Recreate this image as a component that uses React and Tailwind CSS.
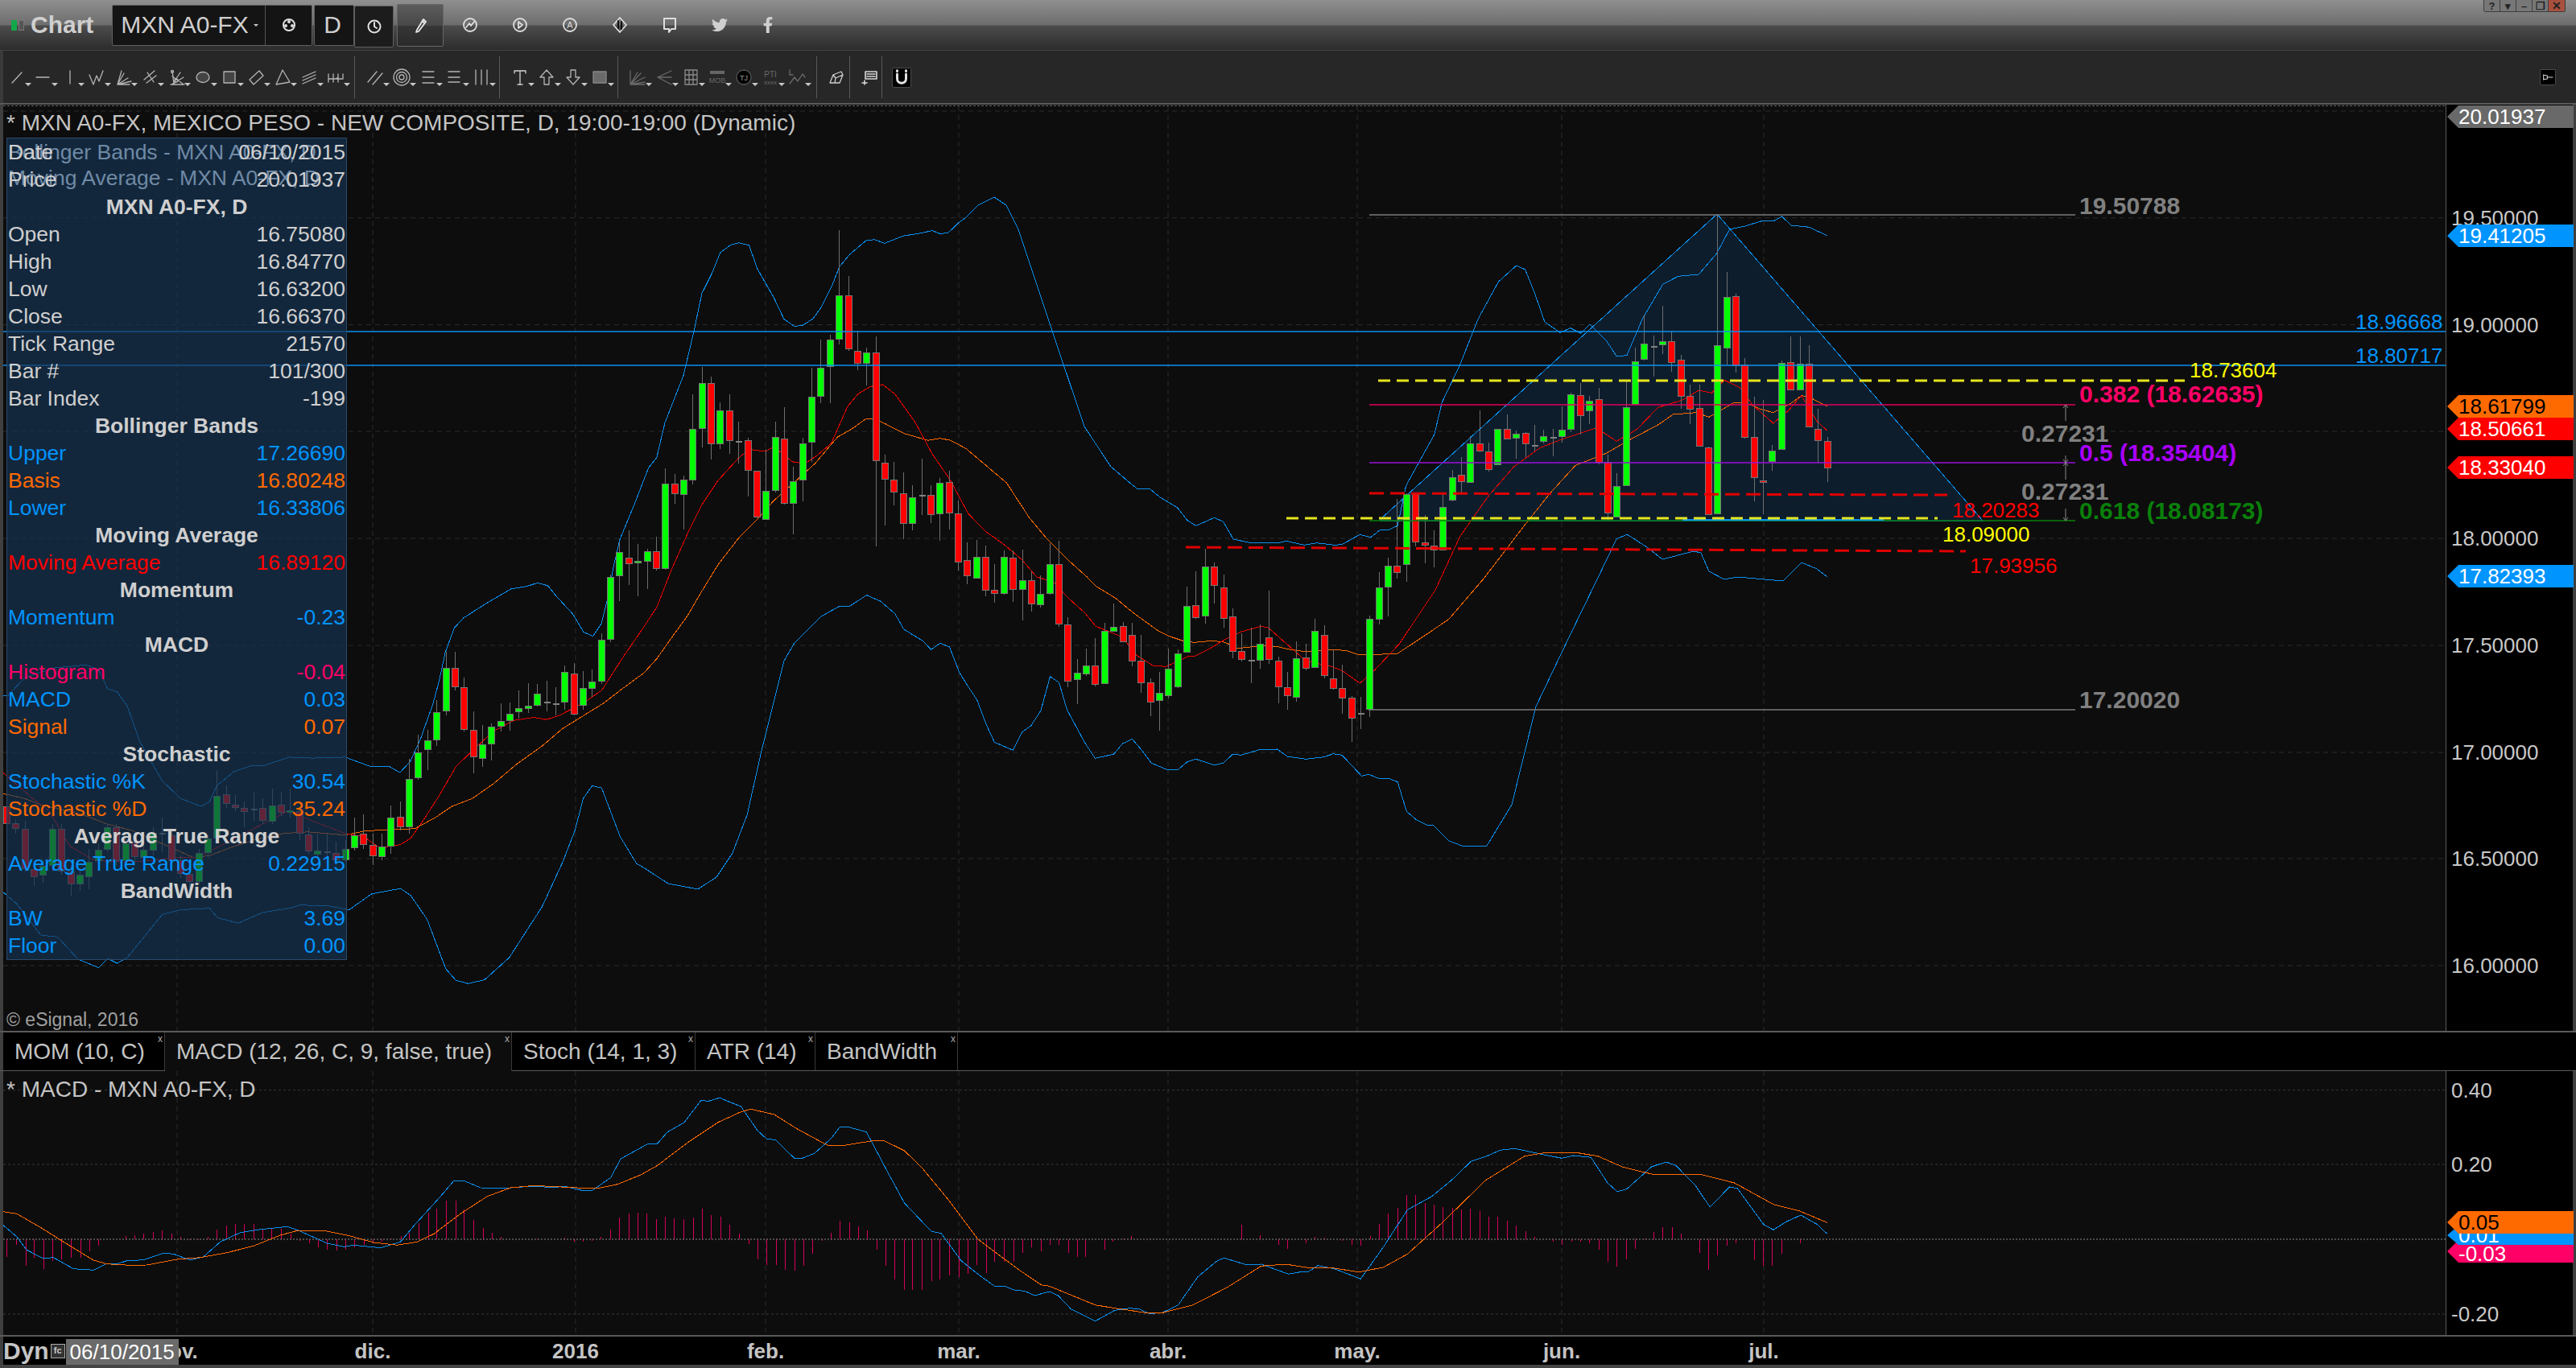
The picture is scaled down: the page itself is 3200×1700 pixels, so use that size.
// Chart window: candles, bollinger bands, fib drawing and MACD pane
import { FaTwitter, FaFacebookF } from "react-icons/fa";

const GRID_X = [220, 463, 715, 951, 1191, 1451, 1686, 1940, 2191];
const GRID_Y = [138, 270.7, 403.5, 536, 669, 802, 935, 1067, 1200];

// values read off the chart: [body top, body bottom, wick top, wick bottom, colour]
const seg = (oy, sy, rows) =>
  rows.map(([a, b, c, d, k]) => [oy + a / sy, oy + b / sy, oy + c / sy, oy + d / sy, k]);

const candles = [
  ...seg(680, 2.53, [
    [816, 870, 800, 880, "r"], [870, 884, 855, 900, "r"], [886, 1010, 860, 1020, "r"], [1012, 1035, 1000, 1065, "r"],
    [1002, 1030, 985, 1055, "g"], [888, 1000, 870, 1020, "g"], [888, 1018, 870, 1030, "r"], [1020, 1058, 1000, 1098, "r"],
    [1032, 1058, 1010, 1080, "g"], [990, 1035, 950, 1075, "g"], [952, 985, 930, 1000, "g"], [882, 950, 870, 960, "g"],
    [882, 985, 870, 1000, "r"], [932, 985, 900, 1010, "g"], [930, 972, 910, 1000, "r"], [952, 975, 920, 1000, "g"],
    [900, 952, 880, 970, "g"], [900, 900, 850, 960, "d"], [908, 985, 890, 1020, "r"], [985, 1025, 970, 1040, "r"],
    [1028, 1050, 1000, 1070, "r"], [962, 1050, 950, 1060, "g"], [918, 960, 905, 975, "g"], [782, 915, 700, 930, "g"],
    [778, 805, 750, 820, "r"], [810, 818, 780, 830, "r"], [820, 830, 800, 880, "r"], [826, 826, 770, 860, "d"],
    [820, 860, 790, 870, "r"], [814, 862, 760, 870, "g"], [812, 834, 770, 845, "r"], [828, 834, 760, 850, "g"],
    [832, 900, 815, 920, "r"], [905, 955, 880, 965, "r"], [955, 966, 900, 975, "g"], [958, 958, 900, 980, "d"],
    [962, 982, 925, 1000, "r"], [950, 982, 920, 990, "g"], [908, 946, 850, 955, "g"], [902, 934, 840, 950, "r"],
    [937, 970, 900, 1000, "r"], [942, 972, 900, 985, "g"], [852, 940, 812, 965, "g"], [848, 880, 800, 890, "r"],
    [730, 878, 665, 900, "g"], [646, 726, 590, 730, "g"], [608, 636, 575, 700, "g"], [520, 606, 480, 625, "g"],
    [382, 516, 330, 530, "g"], [382, 438, 330, 450, "r"], [442, 572, 410, 580, "r"], [576, 660, 515, 712, "r"],
    [621, 663, 560, 690, "g"], [566, 618, 555, 670, "g"], [548, 562, 490, 580, "g"], [526, 544, 488, 578, "g"],
    [507, 518, 450, 540, "g"], [500, 506, 428, 520, "g"], [462, 496, 430, 500, "g"], [488, 488, 420, 515, "d"],
    [494, 494, 440, 530, "d"], [394, 488, 372, 510, "g"], [398, 524, 365, 530, "r"], [444, 498, 390, 510, "g"],
    [424, 443, 385, 470, "g"], [292, 420, 270, 430, "g"],
  ]),
  ...seg(260, 1.96, [
    [897, 1047, 890, 1055, "g"], [836, 893, 810, 955, "g"], [850, 864, 783, 915, "r"], [857, 862, 815, 942, "g"],
    [834, 858, 828, 925, "g"], [834, 875, 797, 880, "r"], [669, 875, 632, 878, "g"], [669, 692, 645, 718, "r"],
    [660, 695, 648, 780, "g"], [536, 660, 450, 670, "g"], [424, 534, 385, 580, "g"], [424, 572, 408, 610, "r"],
    [491, 572, 470, 585, "g"], [491, 563, 450, 595, "r"], [566, 566, 517, 620, "d"], [564, 636, 557, 700, "r"],
    [638, 749, 638, 752, "r"], [687, 755, 585, 757, "g"], [556, 685, 518, 690, "g"], [559, 716, 483, 720, "r"],
    [664, 716, 628, 792, "g"], [571, 660, 556, 712, "g"], [458, 567, 387, 615, "g"], [387, 456, 318, 472, "g"],
    [319, 384, 305, 472, "g"], [211, 316, 50, 330, "g"], [211, 341, 162, 345, "r"], [345, 376, 295, 392, "r"],
    [349, 375, 338, 430, "g"], [349, 613, 310, 822, "r"], [619, 658, 598, 770, "r"], [660, 688, 615, 722, "r"],
    [693, 765, 640, 803, "r"], [702, 765, 672, 782, "g"], [698, 698, 608, 745, "d"], [697, 744, 672, 765, "r"],
    [667, 741, 655, 808, "g"], [665, 739, 637, 780, "r"], [742, 860, 710, 880, "r"],
  ]),
  ...seg(600, 3, [
    [289, 347, 222, 378, "r"], [277, 355, 213, 358, "g"], [277, 400, 234, 422, "r"], [400, 413, 303, 447, "r"],
    [277, 412, 252, 417, "g"], [280, 397, 252, 443, "r"], [364, 397, 249, 513, "g"], [364, 451, 330, 480, "r"],
    [415, 454, 345, 465, "g"], [304, 412, 225, 418, "g"], [304, 526, 217, 537, "r"], [529, 739, 501, 762, "r"],
    [709, 733, 657, 825, "g"], [682, 712, 618, 720, "g"], [682, 751, 580, 758, "r"], [553, 748, 522, 750, "g"],
    [538, 553, 450, 555, "g"], [535, 592, 519, 595, "r"], [568, 665, 522, 684, "r"], [664, 745, 567, 783, "r"],
    [745, 817, 730, 870, "r"], [784, 811, 705, 923, "g"], [694, 793, 618, 805, "g"], [637, 761, 620, 765, "g"],
    [460, 631, 387, 634, "g"], [457, 502, 330, 506, "r"], [313, 496, 245, 525, "g"], [313, 382, 297, 450, "r"],
    [391, 505, 342, 540, "r"], [499, 628, 468, 654, "r"], [628, 659, 560, 665, "r"], [662, 662, 540, 747, "d"],
    [601, 661, 528, 692, "g"], [577, 659, 402, 675, "r"], [664, 761, 648, 822, "r"], [763, 793, 705, 846, "r"],
    [655, 799, 590, 815, "g"], [652, 691, 600, 700, "r"], [553, 689, 507, 690, "g"], [568, 718, 530, 728, "r"],
    [730, 767, 622, 770, "r"], [766, 802, 678, 860, "r"], [802, 877, 795, 965, "r"], [860, 860, 797, 917, "d"],
    [508, 845, 495, 873, "g"], [391, 508, 333, 527, "g"], [310, 388, 280, 497, "g"], [310, 334, 60, 357, "r"],
    [42, 304, 40, 368, "g"], [43, 220, 35, 237, "r"], [223, 232, 120, 300, "r"], [235, 250, 178, 315, "r"],
    [91, 250, 42, 253, "g"],
  ]),
  ...seg(240, 3, [
    [1060, 1145, 1032, 1150, "g"], [1052, 1075, 985, 1125, "r"], [934, 1078, 905, 1080, "g"], [934, 961, 810, 965, "r"],
    [965, 1031, 930, 1038, "r"], [880, 1012, 878, 1015, "g"], [880, 916, 825, 918, "r"], [898, 913, 885, 990, "g"],
    [896, 935, 890, 985, "r"], [941, 941, 865, 960, "d"], [907, 925, 882, 932, "g"], [911, 911, 880, 980, "d"],
    [883, 906, 795, 930, "g"], [751, 880, 745, 890, "g"], [754, 829, 708, 900, "r"], [775, 811, 755, 860, "g"],
    [769, 1003, 725, 1010, "r"], [1004, 1192, 975, 1225, "r"], [1093, 1207, 1045, 1210, "g"], [799, 1090, 695, 1092, "g"],
    [628, 787, 575, 790, "g"], [562, 620, 452, 625, "g"], [573, 573, 530, 685, "d"], [553, 566, 420, 600, "g"],
    [553, 631, 515, 665, "r"], [622, 757, 603, 805, "r"], [757, 805, 715, 862, "r"], [803, 943, 715, 945, "r"],
    [950, 1198, 945, 1200, "r"], [568, 1195, 78, 1198, "g"], [388, 577, 295, 640, "g"], [386, 642, 376, 670, "r"],
    [640, 910, 615, 915, "r"], [910, 1060, 760, 1148, "r"], [1072, 1079, 770, 1198, "r"], [961, 1000, 938, 1035, "g"],
    [634, 956, 625, 958, "g"], [632, 733, 535, 735, "r"], [638, 733, 535, 735, "g"], [638, 871, 567, 873, "r"],
    [880, 922, 805, 1005, "r"], [926, 1024, 910, 1078, "r"],
  ]),
];

const map = (ox, sx, oy, sy, pts) => pts.map(([x, y]) => [ox + x / sx, oy + y / sy]);
const Z3 = (p) => map(0, 1.96, 680, 2.53, p);
const Z8 = (p) => map(400, 1.96, 260, 1.96, p);
const Z9 = (p) => map(1100, 2.24, 600, 3, p);
const Z4 = (p) => map(1600, 1.568, 240, 3, p);
const toPts = (p) => p.map(([x, y]) => `${x.toFixed(1)},${y.toFixed(1)}`).join(" ");

const upper = [
  ...Z3([[8, 466], [20, 466], [60, 410], [130, 380], [210, 370], [240, 385], [262, 445], [285, 455], [310, 500], [340, 610], [395, 735], [440, 790], [490, 815], [510, 800], [528, 750], [570, 705], [610, 688], [640, 688], [705, 660], [760, 663], [840, 660]]),
  ...Z8([[120, 1358], [165, 1358], [190, 1372], [215, 1345], [240, 1290], [270, 1205], [285, 1150], [300, 1080], [322, 1020], [345, 995], [400, 960], [460, 925], [500, 918], [525, 910], [550, 917], [570, 942], [610, 985], [637, 1030], [660, 1040], [680, 1010], [695, 950], [710, 870], [725, 805], [760, 720], [795, 630], [815, 605], [835, 520], [880, 405], [905, 300], [925, 205], [950, 155], [970, 105], [995, 87], [1015, 82], [1040, 88], [1060, 145], [1100, 215], [1125, 268], [1150, 285], [1170, 283], [1195, 267], [1215, 240], [1240, 190], [1260, 140], [1285, 110], [1325, 76], [1345, 74], [1370, 83], [1415, 65], [1460, 58], [1485, 52], [1505, 60], [1525, 57], [1550, 33], [1568, 20]]),
  [1215, 255], [1235, 245], [1250, 255], [1265, 285], [1306, 408], [1347, 530], [1380, 580],
  ...Z9([[680, 0], [700, 22], [735, 22], [765, 55], [812, 92], [840, 140], [864, 160], [915, 130], [940, 145], [968, 210], [1010, 222], [1100, 222], [1115, 217], [1165, 232], [1200, 224], [1250, 232], [1270, 230], [1320, 193], [1350, 203], [1375, 177], [1400, 175], [1425, 160]]),
  ...Z4([[230, 1090], [285, 900], [300, 780], [335, 640], [370, 470], [410, 330], [445, 270], [462, 285], [480, 370], [500, 480], [530, 520], [550, 503], [570, 522], [588, 490], [620, 550], [640, 608], [660, 605], [690, 470], [730, 340], [760, 310], [800, 303], [835, 225], [860, 135], [890, 123], [925, 103], [945, 105], [962, 87], [980, 120], [1015, 127], [1050, 158]]),
];

const lower = [
  ...Z3([[8, 1085], [40, 1120], [100, 1220], [140, 1225], [190, 1295], [240, 1322], [262, 1293], [285, 1308], [310, 1290], [395, 1155], [440, 1140], [510, 1135], [530, 1165], [580, 1182], [640, 1148], [705, 1135], [730, 1125], [800, 1128], [850, 1140], [905, 1090], [975, 1073], [1000, 1095], [1040, 1170], [1085, 1325], [1110, 1362], [1140, 1372], [1180, 1360], [1240, 1290], [1320, 1130], [1370, 990], [1400, 890], [1420, 790], [1442, 750], [1465, 757], [1510, 910], [1550, 995], [1568, 1008]]),
  [830, 1098], [867, 1105], [890, 1090], [910, 1060],
  ...Z8([[1035, 1475], [1070, 1320], [1125, 1100], [1150, 1057], [1215, 992], [1258, 968], [1283, 968], [1326, 940], [1360, 955], [1395, 985], [1415, 1020]]),
  ...Z9([[50, 545], [105, 590], [127, 622], [152, 598], [178, 612], [205, 705], [230, 760], [255, 810], [280, 900], [303, 967], [355, 997], [380, 930], [405, 905], [432, 850], [458, 722], [483, 745], [505, 845], [555, 970], [583, 1027], [635, 1012], [660, 972], [686, 955], [715, 1000], [740, 1045], [785, 1070], [813, 1070], [840, 1040], [863, 1030], [915, 1052], [940, 1045], [966, 1012], [990, 1015], [1040, 995], [1090, 993], [1118, 1020], [1170, 1030], [1220, 1022], [1246, 1010], [1270, 1015], [1325, 1093], [1345, 1087], [1372, 1102], [1400, 1102], [1425, 1115], [1450, 1225], [1478, 1257], [1505, 1275], [1525, 1277], [1568, 1335]]),
  [1816, 1051], [1847, 1051], [1878, 1000], [1908, 878], [1950, 790], [1984, 720], [2008, 670], [2021, 664], [2046, 680], [2065, 695], [2104, 685], [2113, 687], [2123, 710], [2142, 720], [2158, 717], [2215, 722], [2238, 699], [2257, 707], [2270, 717],
];

const basis = [
  ...Z3([[8, 775], [60, 790], [100, 810], [200, 840], [260, 870], [320, 890], [400, 935], [470, 975], [510, 970], [560, 945], [620, 920], [690, 900], [750, 895], [840, 905], [890, 892], [950, 888], [1010, 885], [1060, 850], [1100, 815], [1150, 790], [1200, 745], [1260, 680], [1320, 625], [1370, 570], [1420, 530], [1470, 490], [1510, 450], [1568, 395]]),
  ...Z8([[815, 1095], [850, 1045], [890, 990], [925, 930], [965, 865], [1015, 800], [1060, 755], [1100, 710], [1150, 665], [1200, 620], [1255, 555], [1290, 535], [1325, 510], [1345, 510], [1370, 522], [1420, 547], [1475, 563], [1505, 558], [1530, 563], [1568, 583]]),
  ...Z9([[337, 0], [400, 130], [450, 210], [510, 290], [560, 350], [585, 385], [640, 430], [690, 485], [757, 550], [790, 572], [830, 590], [860, 595], [910, 589], [945, 595], [980, 617], [1040, 608], [1090, 610], [1120, 620], [1170, 630], [1240, 622], [1280, 625], [1320, 642], [1370, 640], [1425, 636], [1500, 570], [1568, 508]]),
  ...Z4([[380, 1440], [420, 1340], [460, 1240], [510, 1120], [560, 1015], [620, 970], [665, 920], [720, 865], [750, 825], [795, 818], [820, 835], [870, 780], [890, 780], [920, 805], [945, 818], [975, 790], [1000, 755], [1015, 760], [1050, 795]]),
];

const avg = [
  ...Z3([[8, 710], [80, 790], [120, 830], [170, 940], [230, 985], [300, 990], [370, 985], [430, 975], [480, 975], [550, 930], [640, 870], [700, 830], [740, 850], [840, 900], [885, 910], [925, 945], [975, 935], [1000, 915], [1030, 860], [1070, 780], [1110, 690], [1150, 640], [1200, 580], [1250, 545], [1300, 535], [1330, 542], [1360, 530], [1420, 490], [1465, 450], [1520, 340], [1568, 250]]),
  ...Z8([[815, 970], [850, 880], [890, 790], [925, 720], [965, 660], [1015, 605], [1040, 585], [1080, 590], [1100, 578], [1145, 615], [1175, 620], [1205, 600], [1240, 570], [1280, 480], [1305, 450], [1335, 432], [1365, 427], [1395, 450], [1445, 520], [1485, 595], [1530, 660]]),
  ...Z9([[230, 115], [280, 183], [330, 230], [380, 287], [420, 350], [470, 372], [505, 425], [555, 485], [585, 535], [660, 575], [695, 640], [745, 682], [780, 685], [815, 665], [845, 645], [863, 645], [900, 620], [950, 580], [990, 555], [1045, 535], [1065, 540], [1120, 605], [1170, 665], [1235, 682], [1270, 700], [1320, 747], [1360, 700], [1430, 600], [1480, 500], [1530, 400]]),
  ...Z4([[335, 1280], [390, 1130], [440, 1020], [490, 950], [530, 920], [600, 875], [640, 925], [680, 880], [720, 800], [770, 770], [800, 735], [825, 745], [850, 697], [880, 725], [905, 790], [945, 858], [975, 810], [1000, 755], [1030, 850], [1050, 885]]),
];

const Z6 = (p) => map(0, 1.206, 1260, 3, p);
const Z7 = (p) => map(1300, 0.825, 1260, 3, p);

const macdLine = [
  ...Z6([[5, 788], [25, 830], [40, 880], [65, 912], [80, 908], [110, 950], [140, 955], [160, 930], [175, 932], [190, 920], [215, 917], [245, 892], [260, 895], [285, 918], [305, 905], [330, 850], [360, 815], [385, 805], [430, 793], [445, 805], [490, 855], [515, 868], [530, 862], [570, 872], [600, 850], [620, 790], [660, 680], [680, 622], [695, 622], [720, 648], [755, 650], [800, 642], [830, 648], [845, 642], [870, 657], [888, 657], [915, 610], [930, 540], [970, 485], [985, 483], [1000, 440], [1025, 405], [1050, 323], [1062, 325], [1078, 313], [1110, 345], [1135, 435], [1148, 465], [1162, 470], [1190, 538], [1200, 540], [1220, 520], [1245, 465], [1258, 422], [1272, 422], [1298, 440], [1330, 590], [1355, 705], [1395, 810], [1410, 818], [1440, 920], [1465, 970], [1490, 1015], [1505, 1015], [1520, 1030], [1535, 1033], [1550, 1050]]),
  ...Z7([[3, 1035], [12, 1050], [25, 1100], [50, 1145], [70, 1105], [85, 1097], [95, 1100], [105, 1117], [118, 1115], [135, 1085], [155, 980], [175, 920], [182, 910], [205, 935], [220, 933], [248, 970], [260, 962], [268, 962], [278, 938], [295, 950], [322, 988], [345, 870], [370, 730], [395, 680], [415, 620], [435, 550], [450, 532], [465, 508], [480, 502], [510, 525], [528, 538], [540, 528], [558, 535], [575, 630], [585, 663], [595, 652], [620, 570], [635, 552], [645, 565], [665, 640], [680, 720], [700, 645], [708, 650], [735, 785], [745, 805], [758, 775], [773, 750], [790, 785], [800, 820]]),
];

const signalLine = [
  ...Z6([[5, 737], [25, 745], [60, 795], [105, 865], [140, 918], [160, 932], [195, 937], [220, 936], [265, 915], [300, 908], [340, 890], [380, 865], [420, 825], [445, 808], [485, 808], [520, 825], [560, 852], [595, 862], [625, 850], [650, 820], [690, 745], [730, 680], [765, 648], [800, 640], [865, 648], [900, 648], [925, 635], [960, 600], [985, 565], [1030, 480], [1075, 405], [1110, 365], [1125, 355], [1160, 375], [1195, 430], [1240, 490], [1260, 492], [1310, 472], [1325, 473], [1355, 510], [1380, 570], [1420, 690], [1465, 840], [1500, 905], [1530, 960], [1560, 1010]]),
  ...Z7([[3, 1015], [50, 1085], [70, 1097], [100, 1113], [120, 1113], [150, 1085], [185, 1020], [220, 940], [245, 933], [270, 947], [295, 948], [320, 962], [345, 945], [370, 895], [405, 780], [450, 620], [490, 530], [510, 518], [545, 518], [565, 530], [590, 570], [620, 597], [650, 600], [670, 598], [705, 630], [745, 710], [772, 735], [800, 778]]),
];

// histogram bars [x on the crop, height, + is below the zero line]
const histLeft = [
  [10, 65], [24, 20], [38, 100], [51, 70], [65, 110], [78, 80], [92, 75], [106, 70], [120, 68], [134, 45], [147, 25],
  [188, -12], [202, -15], [215, -20], [229, -28], [243, -33], [257, -20], [270, -8], [283, 3], [297, 4], [311, -10], [325, -36],
  [339, -50], [352, -58], [366, -58], [380, -58], [393, -38], [407, -40], [421, -40], [435, -20], [449, 5], [463, 15], [476, 30],
  [490, 40], [504, 42], [517, 38], [531, 30], [545, 20], [558, 15], [572, 10], [586, -3], [600, -13], [613, -25], [627, -60],
  [641, -100], [654, -115], [668, -145], [682, -145], [695, -110], [709, -72], [723, -42], [737, -25], [750, -10], [805, -2],
  [846, -5], [860, 10], [873, 8], [887, 6], [900, -10], [914, -35], [928, -80], [942, -95], [955, -100], [969, -95], [983, -75],
  [996, -85], [1010, -78], [1024, -75], [1038, -80], [1052, -115], [1065, -90], [1079, -85], [1093, -55], [1107, -20], [1121, 18],
  [1135, 75], [1148, 95], [1162, 95], [1176, 115], [1190, 118], [1203, 100], [1217, 55], [1231, 5], [1245, -25], [1258, -68],
  [1272, -62], [1285, -48], [1299, -32], [1313, 38], [1327, 98], [1340, 150], [1354, 190], [1367, 190], [1381, 190], [1395, 155],
  [1408, 150], [1422, 135], [1436, 140], [1450, 130], [1463, 95], [1477, 125], [1490, 85], [1504, 85], [1518, 85], [1532, 50],
  [1545, 30], [1559, 45],
];
const histRight = [
  [3, 20], [12, 20], [22, 50], [31, 65], [40, 65], [59, 38], [68, 10], [78, -2], [87, -12], [106, 2], [200, -55], [219, -15],
  [238, 22], [247, 35], [266, 15], [275, -8], [285, -6], [303, 5], [313, 20], [322, 25], [332, -12], [341, -58], [350, -97],
  [360, -118], [369, -165], [378, -165], [388, -135], [397, -130], [406, -120], [416, -118], [425, -112], [434, -115], [444, -105],
  [453, -85], [462, -85], [472, -68], [481, -52], [491, -30], [500, -8], [519, 10], [528, 20], [538, 8], [547, 8], [556, 14],
  [566, 40], [575, 85], [584, 103], [594, 76], [603, 35], [613, -2], [622, -28], [631, -45], [641, -45], [650, -22], [669, 52],
  [678, 115], [687, 60], [697, 25], [706, 15], [725, 78], [734, 100], [743, 98], [753, 55], [772, 15],
];
const hist = [
  ...histLeft.map(([x, h]) => [x / 1.206, h / 3]),
  ...histRight.map(([x, h]) => [1300 + x / 0.825, h / 3]),
];

const panelRows = [
  { label: "Date", value: "06/10/2015", color: "text-[#cfcfcf]" },
  { label: "Price", value: "20.01937", color: "text-[#cfcfcf]" },
  { title: "MXN A0-FX, D" },
  { label: "Open", value: "16.75080", color: "text-[#cfcfcf]" },
  { label: "High", value: "16.84770", color: "text-[#cfcfcf]" },
  { label: "Low", value: "16.63200", color: "text-[#cfcfcf]" },
  { label: "Close", value: "16.66370", color: "text-[#cfcfcf]" },
  { label: "Tick Range", value: "21570", color: "text-[#cfcfcf]" },
  { label: "Bar #", value: "101/300", color: "text-[#cfcfcf]" },
  { label: "Bar Index", value: "-199", color: "text-[#cfcfcf]" },
  { title: "Bollinger Bands" },
  { label: "Upper", value: "17.26690", color: "text-[#0094ff]" },
  { label: "Basis", value: "16.80248", color: "text-[#ff6a00]" },
  { label: "Lower", value: "16.33806", color: "text-[#0094ff]" },
  { title: "Moving Average" },
  { label: "Moving Average", value: "16.89120", color: "text-[#ff0000]" },
  { title: "Momentum" },
  { label: "Momentum", value: "-0.23", color: "text-[#0094ff]" },
  { title: "MACD" },
  { label: "Histogram", value: "-0.04", color: "text-[#ff0066]" },
  { label: "MACD", value: "0.03", color: "text-[#0094ff]" },
  { label: "Signal", value: "0.07", color: "text-[#ff6a00]" },
  { title: "Stochastic" },
  { label: "Stochastic %K", value: "30.54", color: "text-[#0094ff]" },
  { label: "Stochastic %D", value: "35.24", color: "text-[#ff6a00]" },
  { title: "Average True Range" },
  { label: "Average True Range", value: "0.22915", color: "text-[#0094ff]" },
  { title: "BandWidth" },
  { label: "BW", value: "3.69", color: "text-[#0094ff]" },
  { label: "Floor", value: "0.00", color: "text-[#0094ff]" },
];

const chartLabels = [
  { x: 2583, y: 266, t: "19.50788", fill: "#808080", bold: true, size: 30 },
  { x: 2583, y: 880, t: "17.20020", fill: "#808080", bold: true, size: 30 },
  { x: 2583, y: 500, t: "0.382 (18.62635)", fill: "#ff0066", bold: true, size: 30 },
  { x: 2583, y: 573, t: "0.5 (18.35404)", fill: "#aa00ff", bold: true, size: 30 },
  { x: 2583, y: 645, t: "0.618 (18.08173)", fill: "#0a800a", bold: true, size: 30 },
  { x: 2511, y: 549, t: "0.27231", fill: "#808080", bold: true, size: 30 },
  { x: 2511, y: 621, t: "0.27231", fill: "#808080", bold: true, size: 30 },
  { x: 2720, y: 469, t: "18.73604", fill: "#ffff00", size: 26 },
  { x: 2413, y: 673, t: "18.09000", fill: "#ffff00", size: 26 },
  { x: 2425, y: 643, t: "18.20283", fill: "#ff0000", size: 26 },
  { x: 2447, y: 712, t: "17.93956", fill: "#ff0000", size: 26 },
  { x: 2926, y: 409, t: "18.96668", fill: "#0094ff", size: 26 },
  { x: 2926, y: 451, t: "18.80717", fill: "#0094ff", size: 26 },
];

const axisLabels = [
  { y: 270.7, t: "19.50000" },
  { y: 403.5, t: "19.00000" },
  { y: 669, t: "18.00000" },
  { y: 802, t: "17.50000" },
  { y: 935, t: "17.00000" },
  { y: 1067, t: "16.50000" },
  { y: 1200, t: "16.00000" },
];

const priceTags = [
  { y: 145, t: "20.01937", cls: "bg-[#696969] text-white" },
  { y: 293, t: "19.41205", cls: "bg-[#0094ff] text-white" },
  { y: 505, t: "18.61799", cls: "bg-[#ff6a00] text-black" },
  { y: 533, t: "18.50661", cls: "bg-[#ff0000] text-white" },
  { y: 581, t: "18.33040", cls: "bg-[#ff0000] text-white" },
  { y: 716, t: "17.82393", cls: "bg-[#0094ff] text-white" },
];

const dateLabels = [
  ["dic.", 463], ["2016", 715], ["feb.", 951], ["mar.", 1191], ["abr.", 1451], ["may.", 1686], ["jun.", 1940], ["jul.", 2191],
];

const tabs = [
  { name: "MOM (10, C)", w: "w-[201px]" },
  { name: "MACD (12, 26, C, 9, false, true)", w: "w-[431px]", active: true },
  { name: "Stoch (14, 1, 3)", w: "w-[228px]" },
  { name: "ATR (14)", w: "w-[149px]" },
  { name: "BandWidth", w: "w-[177px]" },
];

function Glyph({ size = 24, stroke = "#b4b4b4", sw = 1.3, children }) {
  return (
    <svg width={size} height={size} viewBox="0 0 24 24" fill="none" stroke={stroke} strokeWidth={sw} strokeLinecap="round" strokeLinejoin="round">
      {children}
    </svg>
  );
}

const dim = "#6a6a6a";
const drawTools = [
  <path d="M6 19L18 6" />,
  <path d="M3 12H19" />,
  <path d="M12 4V20" />,
  <path d="M3 9L8 21L12 10L15 17L20 4" />,
  <path d="M5 21L10 4M5 21L13 7M5 21L18 13M5 21L22 17M5 21H20" />,
  <path d="M5 15L18 4M8 19L20 10M9 6L17 18" />,
  <><path d="M7 4L9 20M7 11L20 20M5 21H22M7 21L17 6M7 21L21 12" /><circle cx="7" cy="5" r="1.5" /><circle cx="12" cy="16" r="2" /></>,
  <ellipse cx="12" cy="12" rx="8" ry="6.5" fill="#444" />,
  <rect x="5" y="5" width="14" height="14" fill="#444" />,
  <path d="M4 15L16 4L21 10L9 21Z" />,
  <path d="M12 3L21 18L4 21Z" />,
  <path d="M4 12L20 5M4 16L20 9M4 20L20 13" />,
  <path d="M3 8V18M9 8V18M15 8V18M21 8V14M3 14H21M9 14C12 14 15 14 15 11" />,
];
const drawTools2 = [
  <path d="M3 18L14 5M9 21L21 7" />,
  <><circle cx="12" cy="12" r="10" /><circle cx="12" cy="12" r="6.5" /><circle cx="12" cy="12" r="3" /></>,
  <path d="M5 5H19M5 12H19M5 19H19" />,
  <path d="M4 5H18M4 12H18M4 18H18" />,
  <path d="M5 3V21M12 3V21M19 3V21" />,
];
const drawTools3 = [
  <path d="M5 4H19V7M5 4V7M12 4V21M9 21H15" stroke="#d0d0d0" />,
  <path d="M12 3L20 12H15V21H9V12H4Z" />,
  <path d="M12 21L20 12H15V3H9V12H4Z" />,
  <rect x="4" y="5" width="16" height="14" fill="#6a6a6a" stroke="#888" />,
];
const drawTools4 = [
  <path d="M3 4V21H21M3 21L16 7M3 21L21 12M3 21L12 6M3 21L21 18" stroke={dim} />,
  <path d="M21 4L4 12L21 21M4 12H21" stroke={dim} />,
  <path d="M5 3H20V21H5ZM5 9H20M5 15H20M10 3V21M15 3V21" stroke="#8a8a8a" />,
  <><rect x="3" y="4" width="18" height="4" fill="#666" stroke="none" /><text x="12" y="19" textAnchor="middle" fontSize="9" fill={dim} stroke="none">MOB</text></>,
  <><circle cx="12" cy="12" r="9" fill="#000" stroke="#555" /><text x="12" y="16" textAnchor="middle" fontSize="9" fill="#999" stroke="none">TJ</text></>,
  <><text x="12" y="12" textAnchor="middle" fontSize="10" fill={dim} stroke="none">PTI</text><text x="12" y="21" textAnchor="middle" fontSize="8" fill={dim} stroke="none">xxxx</text></>,
  <path d="M3 3V9H7M3 20L9 12L13 17L19 8L22 12" stroke={dim} />,
];

function Tool({ children }) {
  return (
    <div className="relative w-[33px] h-[33px] flex items-center justify-center">
      <Glyph>{children}</Glyph>
      <span className="absolute left-[27px] top-[23px] w-0 h-0 border-l-[4px] border-r-[4px] border-t-[4px] border-l-transparent border-r-transparent border-t-[#c8c8c8]" />
    </div>
  );
}

function Sep({ className }) {
  return <div className={`w-[1px] h-[52px] bg-[#5a5a5a] shrink-0 ${className}`} />;
}

function TitleBar() {
  const icons = [
    <><circle cx="12" cy="12" r="8" /><path d="M7 15L11 10L13 13L17 8" /></>,
    <><circle cx="12" cy="12" r="8" /><path d="M10 8L15 12L10 16Z" /></>,
    <><circle cx="12" cy="12" r="8" /><text x="12" y="16" textAnchor="middle" fontSize="11" fill="#ddd" stroke="none">A</text></>,
    <><path d="M12 3L20 12L12 21L4 12Z" /><path d="M10 7V16M14 8V17" stroke="#111" strokeWidth="2" /></>,
    <path d="M5 4H19V17H14L11 21V17H5Z" strokeWidth="2" />,
  ];
  return (
    <div className="h-[63px] shrink-0 flex items-center relative bg-[linear-gradient(to_bottom,#8f8f8f_0px,#6d6d6d_31px,#4c4c4c_32px,#2c2c2c_62px)] border-b border-[#444]">
      <div className="flex gap-[2px] ml-[14px] w-[22px]">
        <span className="w-[7px] h-[13px] bg-[#12a84a]" />
        <span className="w-[7px] h-[13px] bg-[#555] border border-[#777]" />
      </div>
      <span className="ml-[2px] text-[30px] font-bold text-[#cfcfcf] leading-none">Chart</span>
      <div className="ml-[23px] w-[249px] h-[51px] flex items-center bg-[#141414] rounded-[2px] border border-[#5f5f5f]">
        <span className="ml-[10px] text-[30px] text-[#cfcfcf] leading-none whitespace-nowrap">MXN A0-FX</span>
        <span className="ml-[6px] w-0 h-0 shrink-0 border-l-[3px] border-r-[3px] border-t-[3px] border-l-transparent border-r-transparent border-t-[#ccc]" />
        <div className="ml-auto w-[58px] h-full shrink-0 border-l border-[#555] flex items-center justify-center">
          <Glyph stroke="#e0e0e0" sw={2}><circle cx="12" cy="12" r="7" /><circle cx="12" cy="8" r="1" /><circle cx="8" cy="13" r="1" /><circle cx="16" cy="13" r="1" /></Glyph>
        </div>
      </div>
      <div className="ml-[2px] w-[50px] h-[51px] flex items-center pl-[11px] bg-[#141414] rounded-[2px] border border-[#5f5f5f]">
        <span className="text-[30px] text-[#cfcfcf] leading-none">D</span>
      </div>
      <div className="w-[49px] h-[52px] mt-[3px] flex items-center justify-center bg-[#1c1c1c] rounded-[2px] border border-[#5f5f5f]">
        <Glyph stroke="#e0e0e0" sw={2}><circle cx="12" cy="12" r="7.5" /><path d="M12 7V12L15 14" /></Glyph>
      </div>
      <div className="ml-[4px] w-[58px] h-[53px] flex items-center justify-center bg-[linear-gradient(to_bottom,#5c5c5c_0%,#484848_50%,#363636_51%,#2a2a2a_100%)] rounded-[2px] border border-[#666]">
        <Glyph stroke="#e8e8e8" sw={1.8}><path d="M8 18L7 21L10 20L19 8L16 5ZM14.500 7L17.500 10" /></Glyph>
      </div>
      <div className="ml-[21px] flex items-center gap-[38px]">
        {icons.map((ic, i) => (
          <span key={i} className="w-[24px] h-[24px] flex items-center justify-center">
            <Glyph stroke="#dedede" sw={1.8}>{ic}</Glyph>
          </span>
        ))}
        <FaTwitter className="w-[20px] h-[20px] text-[#d0d0d0] ml-[2px]" />
        <FaFacebookF className="w-[16px] h-[20px] text-[#d0d0d0] ml-[4px]" />
      </div>
      {/* window buttons */}
      <div className="absolute right-[13px] top-0 flex h-[15px] rounded-b-[3px] border border-t-0 border-[#3c3c3c] overflow-hidden">
        {["?", "▾", "–", "❐"].map((b, i) => (
          <div key={i} className="w-[20px] flex items-center justify-center text-[13px] font-bold text-[#222] bg-[#777] border-r border-[#3c3c3c] leading-none">
            {b}
          </div>
        ))}
        <div className="w-[20px] flex items-center justify-center text-[14px] font-bold text-[#222] bg-[#a9503f] leading-none">✕</div>
      </div>
    </div>
  );
}

function ToolBar() {
  return (
    <div className="h-[65px] shrink-0 flex items-center bg-[#272727] border-l-[4px] border-[#3a3a3a] relative pt-[1px]">
      {drawTools.map((t, i) => <Tool key={i}>{t}</Tool>)}
      <Sep className="ml-[7px] mr-[8px]" />
      {drawTools2.map((t, i) => <Tool key={i}>{t}</Tool>)}
      <Sep className="ml-[6px] mr-[8px]" />
      {drawTools3.map((t, i) => <Tool key={i}>{t}</Tool>)}
      <Sep className="ml-[6px] mr-[7px]" />
      {drawTools4.map((t, i) => <Tool key={i}>{t}</Tool>)}
      <Sep className="ml-[8px] mr-[12px]" />
      <Glyph stroke="#cfcfcf"><path d="M4 19L8 9L18 5L20 9L16 19ZM8 9L11 13L20 9M11 13L10 19" /></Glyph>
      <Sep className="ml-[4px] mr-[12px]" />
      <Glyph stroke="#d8d8d8" sw={1.6}><path d="M7 5H21V14H7ZM9 8H19M9 11H19M3 19H9M6 16V21" /></Glyph>
      <Sep className="ml-[3px] mr-[12px]" />
      <div className="w-[24px] h-[25px] flex items-center justify-center bg-black border border-[#4a4a4a] rounded-[2px]">
        <Glyph stroke="#e4e4e4" sw={3.2} size={22}><path d="M6 8V14C6 22 18 22 18 14V8M6 3V4M18 3V4" /></Glyph>
      </div>
      <div className="absolute left-[3151px] top-[23px] w-[20px] h-[20px] flex items-center justify-center bg-black border border-[#4a4a4a] rounded-[2px]">
        <Glyph stroke="#d8d8d8" size={16} sw={1.6}><path d="M4 7V17M4 8L11 9V15L4 16M11 12H21" /></Glyph>
      </div>
    </div>
  );
}

function VGrid({ y1, y2 }) {
  return GRID_X.map((x) => (
    <line key={x} x1={x} x2={x} y1={y1} y2={y2} stroke="#2c2c2c" strokeDasharray="6 5" />
  ));
}

function PriceChart() {
  return (
    <svg width="3034" height="1151" viewBox="4 130 3034 1151" className="block shrink-0">
      <rect x="4" y="130" width="3034" height="1151" fill="#0d0d0d" />
      <line x1="4" x2="3038" y1="131.500" y2="131.500" stroke="#666" strokeDasharray="3 2" />
      <VGrid y1={132} y2={1281} />
      {GRID_Y.map((y) => (
        <line key={y} x1="4" x2="3038" y1={y} y2={y} stroke="#2c2c2c" strokeDasharray="6 5" />
      ))}

      <polygon points="1715,645 2133,266 2463,647 1715,647" fill="#0e1d2c" stroke="#0a90f0" strokeWidth="1" shapeRendering="crispEdges" />

      <g fill="none" strokeWidth="1" shapeRendering="crispEdges">
        <polyline points={toPts(upper)} stroke="#0a90f0" />
        <polyline points={toPts(lower)} stroke="#0a90f0" />
        <polyline points={toPts(basis)} stroke="#ff6a00" />
        <polyline points={toPts(avg)} stroke="#f00000" />
      </g>

      <g shapeRendering="crispEdges">
        {candles.map(([top, bot, wt, wb, k], i) => {
          const x = Math.round(8 + i * 11.365);
          return (
            <g key={i}>
              <line x1={x + 0.5} x2={x + 0.5} y1={wt} y2={wb} stroke="#6e6e6e" />
              {k === "d" ? (
                <rect x={x - 3} y={top - 1} width="8" height="2" fill="#808080" />
              ) : (
                <rect x={x - 3.5} y={top} width="8" height={Math.max(bot - top, 2)} fill={k === "g" ? "#00ff00" : "#ff0000"} stroke="#777" />
              )}
            </g>
          );
        })}
      </g>

      <line x1="4" x2="3038" y1="412" y2="412" stroke="#0a90f0" strokeWidth="1.4" />
      <line x1="4" x2="3038" y1="454" y2="454" stroke="#0a90f0" strokeWidth="1.4" />
      <line x1="1701" x2="2578" y1="267" y2="267" stroke="#7a7a7a" strokeWidth="1.4" />
      <line x1="1700" x2="2578" y1="882" y2="882" stroke="#7a7a7a" strokeWidth="1.4" />
      <line x1="1701" x2="2578" y1="503" y2="503" stroke="#e0005c" strokeWidth="1.4" />
      <line x1="1701" x2="2578" y1="575" y2="575" stroke="#9a10d8" strokeWidth="1.4" />
      <line x1="1701" x2="2578" y1="647" y2="647" stroke="#0a800a" strokeWidth="1.4" />
      <line x1="2090" x2="2340" y1="646" y2="646" stroke="#0a90f0" strokeWidth="2" />

      <line x1="1712" x2="2714" y1="473" y2="473" stroke="#e6e61e" strokeWidth="3" strokeDasharray="15 8" />
      <line x1="1598" x2="2407" y1="644" y2="644" stroke="#e6e61e" strokeWidth="3" strokeDasharray="15 8" />
      <line x1="1701" x2="2419" y1="613" y2="615" stroke="#e00000" strokeWidth="3" strokeDasharray="18 8" />
      <line x1="1473" x2="2442" y1="680" y2="685" stroke="#e00000" strokeWidth="3" strokeDasharray="18 8" />

      <path d="M2566 503V523M2566 566V596M2566 632V647M2563 507L2566 503L2569 507M2563 571L2566 575L2569 571M2563 579L2566 575L2569 579M2563 643L2566 647L2569 643" stroke="#8a8a8a" fill="none" />

      {chartLabels.map((l) => (
        <text key={l.t + l.y} x={l.x} y={l.y} fill={l.fill} fontSize={l.size} fontWeight={l.bold ? 700 : 400}>
          {l.t}
        </text>
      ))}
      <text x="8" y="1275" fill="#a0a0a0" fontSize="23">© eSignal, 2016</text>
    </svg>
  );
}

function InfoPanel() {
  return (
    <div className="absolute left-[4px] top-[41px] w-[423px] bg-[rgba(22,52,82,0.68)] border border-[#2b4a68] text-[26.500px] leading-none text-[#cfcfcf]">
      <div className="absolute left-[1px] top-[0px] h-[34px] flex items-center text-[#6f8aa6] whitespace-nowrap">Bollinger Bands - MXN A0-FX, D</div>
      <div className="absolute left-[1px] top-[32px] h-[34px] flex items-center text-[#6f8aa6] whitespace-nowrap">Moving Average - MXN A0-FX, D</div>
      {panelRows.map((r, i) =>
        r.title ? (
          <div key={i} className="relative h-[34px] flex items-center justify-center font-bold">
            {r.title}
          </div>
        ) : (
          <div key={i} className={`relative h-[34px] flex items-center justify-between px-[1px] whitespace-nowrap ${r.color}`}>
            <span>{r.label}</span>
            <span>{r.value}</span>
          </div>
        )
      )}
    </div>
  );
}

function Axis({ children }) {
  return (
    <div className="relative flex-1 bg-black border-l border-[#5a5a5a] text-[26px] leading-none">
      {children}
    </div>
  );
}

function Tag({ top, height = 28, cls, children }) {
  return (
    <div
      className={`absolute left-[1px] w-[157px] flex items-center pl-[14px] [clip-path:polygon(14px_0,100%_0,100%_100%,14px_100%,0_50%)] ${cls}`}
      style={{ top, height }}
    >
      {children}
    </div>
  );
}

function MacdPane() {
  const yZero = 1540;
  return (
    <svg width="3034" height="328" viewBox="4 1331 3034 328" className="block shrink-0">
      <rect x="4" y="1331" width="3034" height="328" fill="#0d0d0d" />
      <VGrid y1={1331} y2={1659} />
      {[1354.7, 1447, 1633].map((y) => (
        <line key={y} x1="4" x2="3038" y1={y} y2={y} stroke="#383838" strokeDasharray="3 3" />
      ))}
      <g shapeRendering="crispEdges">
        {hist.map(([x, h], i) => (
          <line key={i} x1={Math.round(x) + 0.5} x2={Math.round(x) + 0.5} y1={yZero} y2={yZero + h} stroke="#d8005a" />
        ))}
      </g>
      <line x1="4" x2="3038" y1={yZero} y2={yZero} stroke="#8a8a8a" strokeDasharray="2 2" />
      <g fill="none" strokeWidth="1" shapeRendering="crispEdges">
        <polyline points={toPts(macdLine)} stroke="#0a90f0" />
        <polyline points={toPts(signalLine)} stroke="#ff6a00" />
      </g>
      <text x="8" y="1363" fill="#c4c4c4" fontSize="28">* MACD - MXN A0-FX, D</text>
    </svg>
  );
}

export default function App() {
  return (
    <div className="w-[3200px] h-[1700px] flex flex-col bg-black overflow-hidden font-['Liberation_Sans',Arial,sans-serif]">
      <TitleBar />
      <ToolBar />

      <div className="h-[2px] shrink-0 bg-[#5a5a5a]" />

      {/* price pane */}
      <div className="flex h-[1151px] shrink-0 relative border-l-[4px] border-[#3f3f3f] border-r-[4px]">
        <PriceChart />
        <Axis>
          {axisLabels.map((a) => (
            <span key={a.t} className="absolute left-[6px] -translate-y-1/2 text-[#c8c8c8]" style={{ top: a.y - 130 }}>
              {a.t}
            </span>
          ))}
          {priceTags.map((p) => (
            <Tag key={p.t} top={p.y - 130 - 14} cls={p.cls}>{p.t}</Tag>
          ))}
        </Axis>
        <div className="absolute left-[4px] top-[9px] text-[28px] leading-none text-[#c4c4c4] whitespace-nowrap">
          * MXN A0-FX, MEXICO PESO - NEW COMPOSITE, D, 19:00-19:00 (Dynamic)
        </div>
        <InfoPanel />
      </div>

      <div className="h-[2px] shrink-0 bg-[#5a5a5a]" />

      {/* indicator tabs */}
      <div className="h-[47px] shrink-0 flex bg-black border-l-[4px] border-[#3f3f3f] text-[28px] text-[#c4c4c4]">
        {tabs.map((t) => (
          <div
            key={t.name}
            className={`relative ${t.w} flex items-center pl-[14px] border-r border-[#3a3a3a] whitespace-nowrap ${t.active ? "h-[48px] z-10 bg-[#0d0d0d]" : ""}`}
          >
            {t.name}
            <span className="absolute right-[2px] top-[2px] text-[12px] leading-none text-[#aaa]">x</span>
          </div>
        ))}
      </div>
      <div className="h-[1px] shrink-0 bg-[#5a5a5a]" />

      {/* macd pane */}
      <div className="flex h-[328px] shrink-0 border-l-[4px] border-[#3f3f3f] border-r-[4px]">
        <MacdPane />
        <Axis>
          <span className="absolute left-[6px] -translate-y-1/2 text-[#c8c8c8]" style={{ top: 24 }}>0.40</span>
          <span className="absolute left-[6px] -translate-y-1/2 text-[#c8c8c8]" style={{ top: 116 }}>0.20</span>
          <span className="absolute left-[6px] -translate-y-1/2 text-[#c8c8c8]" style={{ top: 302 }}>-0.20</span>
          <Tag top={210} height={28} cls="bg-[#ff0066] text-white">
            <span className="relative top-[3px]">-0.03</span>
          </Tag>
          <Tag top={192} height={24} cls="bg-[#0094ff] text-white">0.01</Tag>
          <Tag top={174} height={28} cls="bg-[#ff6a00] text-black">0.05</Tag>
        </Axis>
      </div>

      <div className="h-[2px] shrink-0 bg-[#5a5a5a]" />

      {/* date axis */}
      <div className="h-[35px] shrink-0 relative bg-black border-l-[4px] border-[#3f3f3f] text-[26px] text-[#c4c4c4] leading-none font-bold">
        <span className="absolute left-[216px] top-[5px] -translate-x-1/2">nov.</span>
        {dateLabels.map(([t, x]) => (
          <span key={t} className="absolute top-[5px] -translate-x-1/2" style={{ left: x - 4 }}>
            {t}
          </span>
        ))}
        <div className="absolute left-0 top-0 h-[35px] flex items-center">
          <span className="text-[30px] text-[#c4c4c4] font-bold">Dyn</span>
          <span className="ml-[2px] w-[18px] h-[18px] border border-[#aaa] bg-[#333] text-[11px] flex items-center justify-center text-[#ccc]">fc</span>
          <span className="ml-[1px] w-[140px] h-[32px] mt-[3px] bg-[#6a6a6a] flex items-center justify-center text-white font-normal">06/10/2015</span>
        </div>
      </div>
      <div className="flex-1 bg-[#444]" />
    </div>
  );
}
